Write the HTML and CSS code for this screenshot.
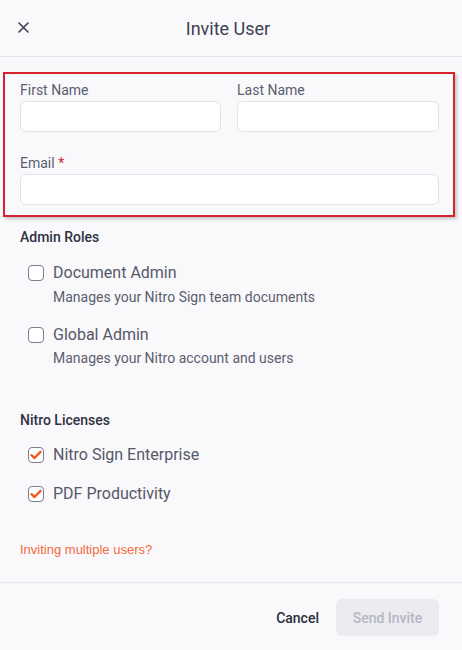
FILE: index.html
```html
<!DOCTYPE html>
<html lang="en">
<head>
<meta charset="utf-8">
<title>Invite User</title>
<link rel="stylesheet" href="styles.css">
</head>
<body>
<div class="modal">
  <header class="header">
    <button class="close" aria-label="Close">
      <svg width="11" height="11" viewBox="0 0 11 11"><path d="M1 1L10 10M10 1L1 10" stroke="#3d4052" stroke-width="1.6" stroke-linecap="round"/></svg>
    </button>
    <h1 class="title">Invite User</h1>
  </header>
  <main class="body">
    <section class="highlight">
      <div class="name-grid">
        <div class="field">
          <label class="label">First Name</label>
          <input class="input" type="text">
        </div>
        <div class="field">
          <label class="label">Last Name</label>
          <input class="input" type="text">
        </div>
      </div>
      <div class="field email-field">
        <label class="label">Email <span class="req">*</span></label>
        <input class="input" type="email">
      </div>
    </section>

    <h2 class="section-title roles-title">Admin Roles</h2>
    <div class="option option-first">
      <div class="option-row"><span class="box"></span><span class="option-label">Document Admin</span></div>
      <div class="option-desc">Manages your Nitro Sign team documents</div>
    </div>
    <div class="option option-second">
      <div class="option-row"><span class="box"></span><span class="option-label">Global Admin</span></div>
      <div class="option-desc">Manages your Nitro account and users</div>
    </div>

    <h2 class="section-title licenses-title">Nitro Licenses</h2>
    <div class="option option-license1">
      <div class="option-row"><span class="box checked"><svg width="12" height="10" viewBox="0 0 12 10"><path d="M1.5 5.2L4.5 8L10.5 1.8" fill="none" stroke="#f05a22" stroke-width="2.4" stroke-linecap="round" stroke-linejoin="round"/></svg></span><span class="option-label">Nitro Sign Enterprise</span></div>
    </div>
    <div class="option option-license2">
      <div class="option-row"><span class="box checked"><svg width="12" height="10" viewBox="0 0 12 10"><path d="M1.5 5.2L4.5 8L10.5 1.8" fill="none" stroke="#f05a22" stroke-width="2.4" stroke-linecap="round" stroke-linejoin="round"/></svg></span><span class="option-label">PDF Productivity</span></div>
    </div>

    <a class="multi-link" href="#">Inviting multiple users?</a>
  </main>
  <footer class="footer">
    <button class="btn-cancel">Cancel</button>
    <button class="btn-send" disabled>Send Invite</button>
  </footer>
</div>
</body>
</html>
```

FILE: styles.css
```css
html, body {
  margin: 0;
  padding: 0;
  background: #f9f9fb;
}
body {
  font-family: Roboto, "Noto Sans", sans-serif;
  color: #5b5e6f;
  width: 462px;
  height: 650px;
  overflow: hidden;
}
.modal {
  display: flex;
  flex-direction: column;
  height: 650px;
}
.header {
  box-sizing: border-box;
  height: 57px;
  border-bottom: 1px solid #e3e4ea;
  display: flex;
  align-items: center;
  justify-content: center;
  position: relative;
  flex: none;
}
.close {
  position: absolute;
  left: 18px;
  top: 22px;
  width: 12px;
  height: 12px;
  padding: 0;
  border: 0;
  background: transparent;
  display: flex;
}
.title {
  margin: 1px 6px 0 0;
  font-size: 18px;
  font-weight: 400;
  color: #3d4052;
  line-height: 24px;
}
.body {
  flex: 1;
  padding: 0 23px 0 20px;
  display: flex;
  flex-direction: column;
  align-items: flex-start;
}
.highlight {
  margin: 15px -16px 0 -17px;
  align-self: stretch;
  border: 2px solid #d6222c;
  box-shadow: 2px 2px 3px rgba(0, 0, 0, 0.22);
  padding: 6px 14px 10px 15px;
}
.name-grid {
  display: grid;
  grid-template-columns: 201px 202px;
  column-gap: 16px;
}
.field {
  display: flex;
  flex-direction: column;
}
.email-field {
  margin-top: 21px;
}
.label {
  font-size: 14px;
  line-height: 20px;
  color: #5b5e6f;
  margin-bottom: 1px;
}
.req {
  color: #d6223a;
}
.input {
  height: 31px;
  box-sizing: border-box;
  border: 1px solid #e2e3e9;
  border-radius: 6px;
  background: #fff;
  margin: 0;
  padding: 0 8px;
  font: inherit;
}
.section-title {
  margin: 0;
  font-size: 14px;
  font-weight: 500;
  line-height: 20px;
  color: #2f3142;
}
.roles-title {
  margin-top: 10px;
}
.licenses-title {
  margin-top: 42px;
}
.option {
  padding-left: 8px;
  display: flex;
  flex-direction: column;
}
.option-first {
  margin-top: 14px;
}
.option-second {
  margin-top: 16px;
}
.option-license1 {
  margin-top: 13px;
}
.option-license2 {
  margin-top: 15px;
}
.option-row {
  display: flex;
  align-items: center;
  height: 24px;
}
.box {
  width: 16px;
  height: 16px;
  box-sizing: border-box;
  border: 1.3px solid #7b7e8c;
  border-radius: 4px;
  background: #fff;
  margin-right: 9px;
  display: flex;
  align-items: center;
  justify-content: center;
}
.option-label {
  font-size: 16px;
  color: #555869;
  line-height: 24px;
}
.option-desc {
  font-size: 14px;
  line-height: 20px;
  padding-left: 25px;
  margin-top: 2px;
  color: #5b5e6f;
}
.option-second .option-desc {
  margin-top: 1px;
}
.multi-link {
  margin-top: 34px;
  font-family: "Liberation Sans", Arial, sans-serif;
  font-size: 13px;
  line-height: 20px;
  color: #f26a3c;
  text-decoration: none;
}
.footer {
  box-sizing: border-box;
  flex: none;
  height: 68px;
  border-top: 1px solid #e6e6ec;
  display: flex;
  align-items: flex-start;
  justify-content: flex-end;
  padding: 16px 23px 0 0;
  gap: 17px;
}
.btn-cancel {
  border: 0;
  background: transparent;
  font-family: inherit;
  font-size: 14px;
  font-weight: 500;
  color: #2b2d3a;
  height: 37px;
  padding: 0;
}
.btn-send {
  width: 103px;
  height: 37px;
  border: 0;
  border-radius: 6px;
  background: #ebebf0;
  color: #b5b7c3;
  font-family: inherit;
  font-size: 14px;
  font-weight: 500;
}
```
